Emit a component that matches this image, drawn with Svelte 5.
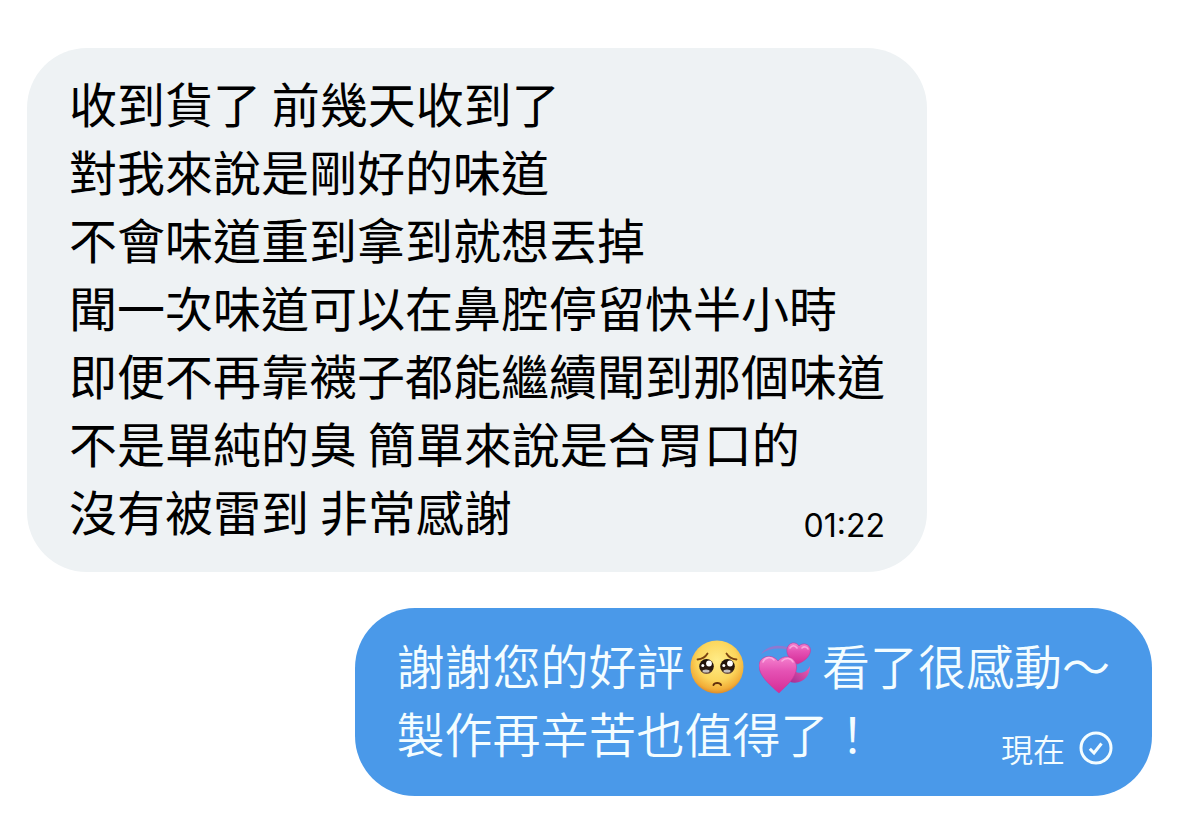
<script>
  const review = [
    '收到貨了 前幾天收到了',
    '對我來說是剛好的味道',
    '不會味道重到拿到就想丟掉',
    '聞一次味道可以在鼻腔停留快半小時',
    '即便不再靠襪子都能繼續聞到那個味道',
    '不是單純的臭 簡單來說是合胃口的',
    '沒有被雷到 非常感謝'
  ];
</script>

<main class="chat" lang="zh-Hant">
  <article class="bubble received">
    <div class="text">
      {#each review as line}
        <p>{line}</p>
      {/each}
    </div>
    <div class="meta"><time>01:22</time></div>
  </article>

  <article class="bubble sent">
    <div class="text">
      <p>謝謝您的好評<svg class="emoji face" viewBox="0 0 54 54" role="img" aria-label="pleading face">
          <defs>
            <radialGradient id="skin" cx="50%" cy="38%" r="62%">
              <stop offset="0" stop-color="#ffec88" />
              <stop offset="0.6" stop-color="#fcd65c" />
              <stop offset="0.88" stop-color="#f2ae38" />
              <stop offset="1" stop-color="#dc8b2c" />
            </radialGradient>
            <linearGradient id="eye" x1="0" y1="0" x2="0" y2="1">
              <stop offset="0" stop-color="#1c1008" />
              <stop offset="0.7" stop-color="#2a1a10" />
              <stop offset="1" stop-color="#7a5a48" />
            </linearGradient>
          </defs>
          <circle cx="27" cy="27" r="26.5" fill="url(#skin)" />
          <path d="M7.500 19.500C12 19 15.500 17 17.500 13.500M36.500 13.500C38.500 17 42 19 46.500 19.500" fill="none" stroke="#7a4310" stroke-width="1.800" stroke-linecap="round" />
          <ellipse cx="16.500" cy="26.500" rx="7.300" ry="7.600" fill="url(#eye)" />
          <ellipse cx="37.500" cy="26.500" rx="7.300" ry="7.600" fill="url(#eye)" />
          <g fill="#fff">
            <circle cx="19" cy="23.500" r="2.900" />
            <circle cx="40" cy="23.500" r="2.900" />
            <circle cx="12.800" cy="25.500" r="1.500" />
            <circle cx="33.800" cy="25.500" r="1.500" />
            <ellipse cx="16" cy="31" rx="3.500" ry="1.500" opacity="0.700" />
            <ellipse cx="37" cy="31" rx="3.500" ry="1.500" opacity="0.700" />
          </g>
          <path d="M23.500 45C24.500 42.300 30 42.300 31 45" fill="none" stroke="#63300c" stroke-width="2" stroke-linecap="round" />
        </svg>{' '}<svg class="emoji hearts" viewBox="0 0 52 54" role="img" aria-label="revolving hearts">
          <defs>
            <linearGradient id="big" x1="0" y1="0" x2="0" y2="1">
              <stop offset="0" stop-color="#f583cf" />
              <stop offset="0.4" stop-color="#e552b4" />
              <stop offset="1" stop-color="#d52c96" />
            </linearGradient>
            <linearGradient id="trail" x1="0" y1="1" x2="1" y2="0">
              <stop offset="0" stop-color="#a52d94" />
              <stop offset="1" stop-color="#f05fb2" />
            </linearGradient>
          </defs>
          <path d="M2 14C7 7 17 4 28 7L29 10C19 7 9 9 2 14Z" fill="#8f78d0" />
          <path d="M51 26C51 37 43 45 31 42L35 31C42 35 48 32 51 26Z" fill="url(#trail)" />
          <path d="M38.500 24C33 21 27 16 28 9C29.500 2 37 1 40 6C44 2 51 4 51.500 10C51.500 17 44 22 38.500 24Z" fill="url(#big)" stroke="#c93699" stroke-width="0.600" />
          <path d="M20 53C12 46 0 36 0 26C0 16 13 13 19 21C26 13 38 17 37.500 28C37 38 27 46 20 53Z" fill="url(#big)" stroke="#c93699" stroke-width="0.600" />
          <path d="M4 22C6 17 12 16 15 20M23 21C27 17 32 18 34 22M31 8C33 5 36 5 38 8M43 8C45 6 48 7 49 9" fill="none" stroke="#ffc0ea" stroke-width="1.600" stroke-linecap="round" opacity="0.700" />
        </svg>{' '}看了很感動～</p>
      <p>製作再辛苦也值得了！</p>
    </div>
    <div class="meta">
      <span>現在</span>
      <svg class="status" viewBox="0 0 34 34" role="img" aria-label="sent">
        <circle cx="17" cy="17" r="15" fill="none" stroke="currentColor" stroke-width="3" />
        <path d="M10.800 17.800L15 22L22.500 12.500" fill="none" stroke="currentColor" stroke-width="3" />
      </svg>
    </div>
  </article>
</main>

<style>
  :global(body) {
    margin: 0;
    background: #fff;
  }

  .chat {
    display: flex;
    flex-direction: column;
    gap: 36px;
    padding: 48px 27px 40px;
    font-family: 'Noto Sans CJK TC', sans-serif;
  }

  .bubble {
    display: grid;
    box-sizing: border-box;
    max-width: 100%;
    border-radius: 60px;
    font-size: 48px;
    line-height: 68px;
  }

  .received {
    align-self: flex-start;
    padding: 20px 42px 28px;
    background: #eef2f4;
    color: #000;
  }

  .sent {
    align-self: flex-end;
    padding: 22px 42px 30px;
    background: #4a99e9;
    color: #f4fdff;
    font-weight: 350;
  }

  .text,
  .meta {
    grid-area: 1 / 1;
  }

  p {
    margin: 0;
  }

  .meta {
    display: flex;
    align-items: center;
    align-self: end;
    justify-self: end;
    gap: 14px;
    font-size: 32px;
    line-height: 36px;
  }

  time {
    font-family: Inter, 'Noto Sans CJK TC', sans-serif;
  }

  .sent .meta {
    margin-right: -3px;
  }

  .emoji {
    height: 54px;
    vertical-align: -9px;
  }

  .face {
    width: 54px;
    margin: 0 5px;
  }

  .hearts {
    width: 52px;
  }

  .status {
    width: 34px;
    height: 34px;
  }
</style>
